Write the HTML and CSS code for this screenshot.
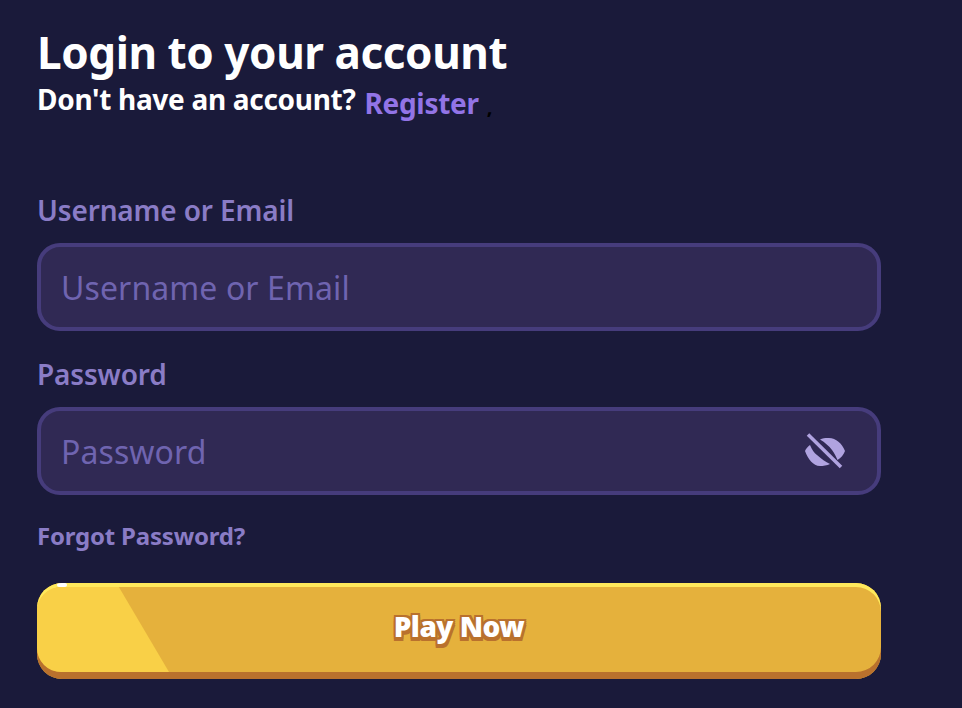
FILE: index.html
```html
<!DOCTYPE html>
<html lang="en">
<head>
<meta charset="utf-8">
<title>Login</title>
<link rel="stylesheet" href="styles.css">
</head>
<body>
<main class="login">
  <h1 class="title">Login to your account</h1>
  <p class="subtitle">Don't have an account? <a class="register" href="#">Register</a><span class="comma">,</span></p>
  <form class="form">
    <label class="label" for="user">Username or Email</label>
    <div class="field"><input class="input" id="user" type="text" placeholder="Username or Email"></div>
    <label class="label" for="pass">Password</label>
    <div class="field">
      <input class="input" id="pass" type="password" placeholder="Password">
      <svg class="eye" width="40" height="36" viewBox="0 0 40 36" aria-hidden="true">
        <path class="eye-fill" d="M15 6.500C18 5.200 21 4.800 24 5C31 5.500 37 10 40 18C38.500 22 36 25 32.500 27C31 24 29.500 20 27 17C24 13 20 9.500 15 6.500Z"/>
        <path class="eye-fill" d="M0 18C1 15.500 2.800 13.500 5 12C7 16.500 9 20 12 22C16.500 26 20.500 29 25 31C22 32.500 18 33 15 33C8 33 3 26 0 18Z"/>
        <path class="eye-slash" d="M3 1.500L36 34"/>
      </svg>
    </div>
    <a class="forgot" href="#">Forgot Password?</a>
    <button class="play" type="button"><span class="play-text">Play Now</span></button>
  </form>
</main>
</body>
</html>
```

FILE: styles.css
```css
* { box-sizing: border-box; }
html, body { margin: 0; height: 100%; }
body {
  background: #1a1a3a;
  font-family: "Noto Sans", sans-serif;
  overflow: hidden;
}
.login {
  width: 844px;
  margin-left: 37px;
  padding-top: 26px;
}
.title {
  margin: 0;
  color: #fff;
  font-size: 44px;
  font-weight: 700;
  line-height: 52px;
  letter-spacing: -0.42px;
}
.subtitle {
  margin: 0;
  height: 111px;
  color: #fff;
  font-size: 28px;
  font-weight: 700;
  line-height: 42px;
  letter-spacing: -0.3px;
}
.register {
  color: #9274e6;
  text-decoration: none;
  position: relative;
  top: 4px;
  margin-left: 2px;
}
.comma {
  color: #000;
  font-size: 20px;
  font-weight: 700;
  margin-left: 8px;
  position: relative;
  top: 4px;
}
.form { display: flex; flex-direction: column; }
.label {
  color: #8a7cc6;
  font-size: 28px;
  font-weight: 600;
  line-height: 43px;
  height: 44px;
  margin-bottom: 10px;
  letter-spacing: -0.15px;
}
.field { position: relative; margin-bottom: 22px; height: 88px; }
.input {
  display: block;
  width: 100%;
  height: 88px;
  padding: 0 20px;
  background: #302954;
  border: 4px solid #463c7c;
  border-radius: 23px;
  color: #fff;
  font-family: inherit;
  font-size: 32px;
  letter-spacing: 0.1px;
  outline: none;
}
.input::placeholder { color: #6f64b0; opacity: 1; }
.eye { position: absolute; right: 36px; top: 26px; }
.eye-fill { fill: #b0a3e0; }
.eye-slash { stroke: #b0a3e0; stroke-width: 3.500; fill: none; }
.forgot {
  color: #8a7cc6;
  font-size: 24px;
  font-weight: 700;
  line-height: 32px;
  text-decoration: none;
  margin-top: 3px;
  letter-spacing: -0.2px;
}
.play {
  position: relative;
  height: 96px;
  margin-top: 31px;
  padding: 0 0 10px;
  border: 0;
  border-radius: 25px;
  overflow: hidden;
  background: #e5b13c;
  box-shadow: inset 0 4px 0 #ffe95c, inset 0 -7px 0 #b9712d;
  font-family: inherit;
}
.play::before {
  content: "";
  position: absolute;
  left: 0;
  top: 4px;
  bottom: 7px;
  width: 132px;
  background: #f9d047;
  clip-path: polygon(0 0, 62% 0, 100% 100%, 0 100%);
  border-radius: 24px 0 0 24px;
}
.play::after {
  content: "";
  position: absolute;
  left: 20px;
  top: 0;
  width: 10px;
  height: 4px;
  background: #fff;
  border-radius: 2px;
}
.play-text {
  position: relative;
  z-index: 1;
  color: #fff;
  font-size: 28px;
  font-weight: 900;
  letter-spacing: -0.5px;
  text-shadow: -2px 0 0 #b9712d, 2px 0 0 #b9712d, 0 -2px 0 #b9712d, 0 4px 0 #b9712d, 2px 4px 0 #b9712d, -2px 4px 0 #b9712d, 2px -2px 0 #b9712d, -2px -2px 0 #b9712d, 2px 2px 0 #b9712d, -2px 2px 0 #b9712d;
}
```
